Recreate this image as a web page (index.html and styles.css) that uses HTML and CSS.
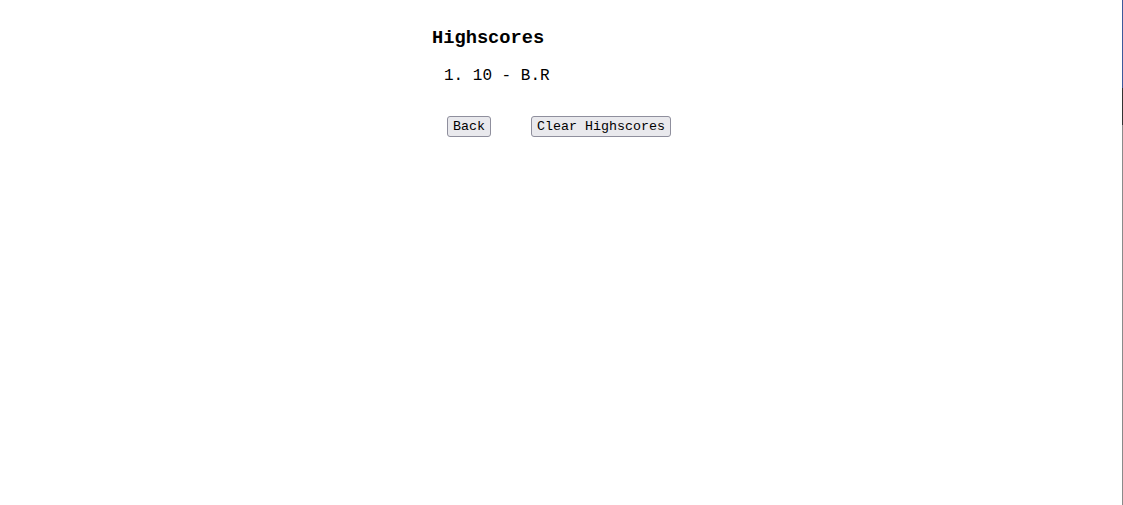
FILE: index.html
```html
<!DOCTYPE html>
<html>
<head>
<meta charset="utf-8">
<link rel="stylesheet" href="styles.css">
</head>
<body>
<div class="edge"></div>
<main class="page">
  <h3 class="title">Highscores</h3>
  <div class="scores">
    <div class="score">1. 10 - B.R</div>
  </div>
  <div class="actions">
    <button class="btn">Back</button>
    <button class="btn">Clear Highscores</button>
  </div>
</main>
</body>
</html>
```
FILE: styles.css
```css
html, body {
  margin: 0;
  padding: 0;
  background: #fff;
}
body {
  font-family: "Liberation Mono", "Courier New", monospace;
  color: #000;
  height: 505px;
  overflow: hidden;
}
.page {
  width: 259px;
  margin: 0 auto;
  padding-top: 28px;
}
.title {
  font-size: 18.72px;
  font-weight: bold;
  margin: 0;
  line-height: 21px;
}
.scores {
  margin-top: 18px;
  padding-left: 12px;
}
.score {
  font-size: 16px;
  line-height: 18px;
}
.actions {
  display: flex;
  gap: 40px;
  margin-top: 31px;
  padding-left: 15px;
}
.btn {
  font-family: "Liberation Mono", "Courier New", monospace;
  font-size: 13.33px;
  color: #000;
  background: #e9e9ed;
  border: 1px solid #8f8f9d;
  border-radius: 3px;
  padding: 1px 5px;
  line-height: 17px;
  height: 21px;
}
.edge {
  position: fixed;
  top: 0;
  right: 0;
  width: 1px;
  height: 505px;
  background: linear-gradient(to bottom, #3c5a9a 0, #3c5a9a 88px, #333 88px, #333 125px, #8a8a8a 125px);
}
```
